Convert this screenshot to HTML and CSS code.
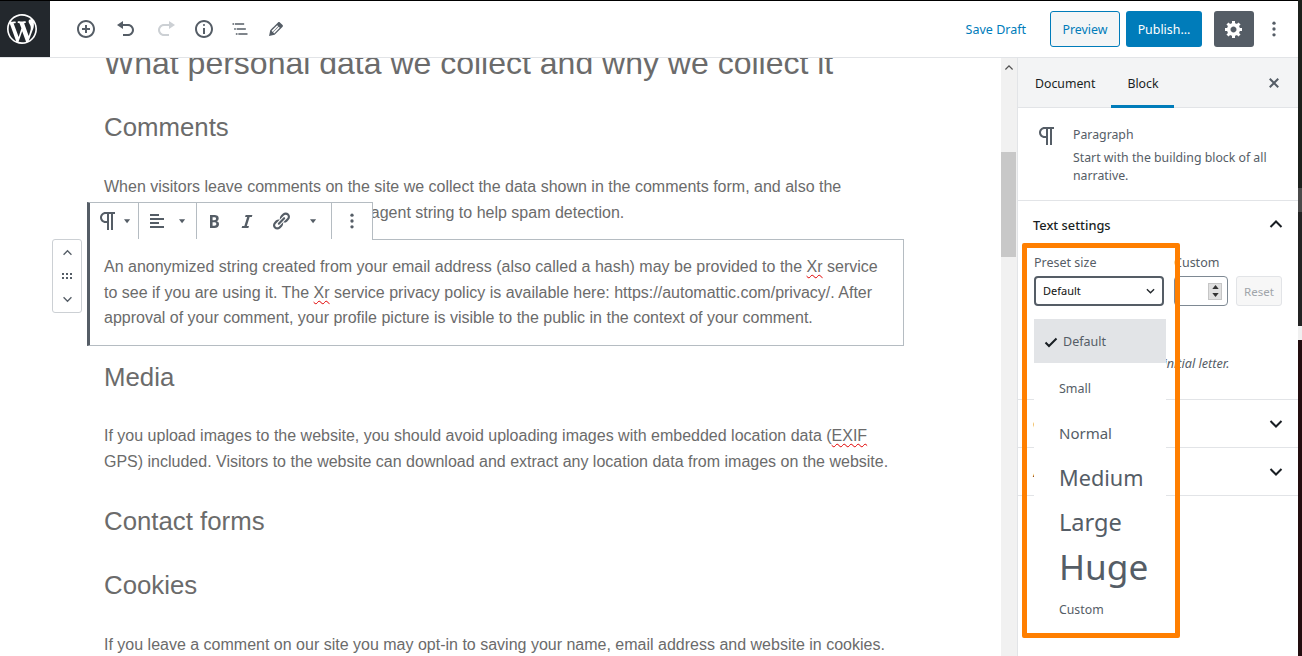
FILE: index.html
```html
<!DOCTYPE html>
<html lang="en">
<head>
<meta charset="utf-8">
<title>Edit Post</title>
<link rel="stylesheet" href="styles.css">
</head>
<body>
<div class="app">
  <div class="main">
    <header class="topbar">
      <div class="logo">
        <svg class="logo-svg" viewBox="0 0 20 20"><path d="M20 10c0-5.51-4.49-10-10-10C4.48 0 0 4.49 0 10c0 5.52 4.48 10 10 10 5.51 0 10-4.48 10-10zM7.78 15.37L4.37 6.22c.55-.02 1.17-.08 1.17-.08.5-.06.44-1.13-.06-1.11 0 0-1.45.11-2.37.11-.18 0-.37 0-.58-.01C4.12 2.69 6.87 1.11 10 1.11c2.33 0 4.45.87 6.05 2.34-.68-.11-1.65.39-1.65 1.58 0 .74.45 1.36.9 2.1.35.61.55 1.36.55 2.46 0 1.49-1.4 5-1.4 5l-3.03-8.37c.54-.02.82-.17.82-.17.5-.05.44-1.25-.06-1.22 0 0-1.44.12-2.38.12-.87 0-2.33-.12-2.33-.12-.5-.03-.56 1.2-.06 1.22l.92.08 1.26 3.41zM17.41 10c.24-.64.74-1.87.43-4.25.7 1.29 1.05 2.71 1.05 4.25 0 3.29-1.73 6.24-4.4 7.78.97-2.59 1.94-5.2 2.92-7.78zM6.1 18.09C3.12 16.65 1.11 13.53 1.11 10c0-1.3.23-2.48.72-3.59C3.25 10.3 4.67 14.2 6.1 18.09zm4.03-6.63l2.58 6.98c-.86.29-1.76.45-2.71.45-.79 0-1.57-.11-2.29-.33.81-2.38 1.62-4.74 2.42-7.1z"/></svg>
      </div>
      <div class="tools">
        <svg class="ic" viewBox="0 0 20 20"><path d="M10 1c-5 0-9 4-9 9s4 9 9 9 9-4 9-9-4-9-9-9zm0 16c-3.9 0-7-3.1-7-7s3.1-7 7-7 7 3.1 7 7-3.1 7-7 7zm1-11H9v3H6v2h3v3h2v-3h3V9h-3V6z"/></svg>
        <svg class="ic ic-hist" viewBox="0 0 20 20"><path d="M12 5H7V2L1 6l6 4V7h5c2.2 0 4 1.8 4 4s-1.8 4-4 4H7v2h5c3.3 0 6-2.7 6-6s-2.7-6-6-6z"/></svg>
        <svg class="ic ic-hist ic-off" viewBox="0 0 20 20"><path d="M8 5h5V2l6 4-6 4V7H8c-2.2 0-4 1.8-4 4s1.8 4 4 4h5v2H8c-3.3 0-6-2.7-6-6s2.7-6 6-6z"/></svg>
        <svg class="ic ic-info" viewBox="0 0 20 20"><path d="M9 15h2V9H9v6zm1-10c-.5 0-1 .5-1 1s.5 1 1 1 1-.5 1-1-.5-1-1-1zm0-4c-5 0-9 4-9 9s4 9 9 9 9-4 9-9-4-9-9-9zm0 16c-3.9 0-7-3.1-7-7s3.1-7 7-7 7 3.1 7 7-3.1 7-7 7z"/></svg>
        <svg class="ic" viewBox="0 0 24 24"><path d="M5 5H3v2h2V5zm3 8h11v-2H8v2zm9-8H6v2h11V5zM7 11H5v2h2v-2zm0 8h2v-2H7v2zm3-2v2h11v-2H10z"/></svg>
        <svg class="ic" viewBox="0 0 20 20"><path d="M13.89 3.39l2.71 2.72c.46.46.42 1.24.03 1.64l-8.01 8.02-5.56 1.16 1.16-5.58s7.6-7.63 7.99-8.03c.39-.39 1.22-.39 1.68.07zm-2.73 2.79l-5.59 5.61 1.11 1.11 5.54-5.65zm-2.97 8.23l5.58-5.6-1.07-1.08-5.59 5.6z"/></svg>
      </div>
      <div class="actions">
        <span class="save">Save Draft</span>
        <span class="btn btn-preview">Preview</span>
        <span class="btn btn-publish">Publish...</span>
        <span class="btn btn-gear"><svg class="ic-gear" viewBox="0 0 20 20"><path d="M18 12h-2.18c-.17.7-.44 1.35-.81 1.93l1.54 1.54-2.1 2.1-1.54-1.54c-.58.36-1.23.63-1.91.79V19H8v-2.18c-.68-.16-1.33-.43-1.91-.79l-1.54 1.54-2.12-2.12 1.54-1.54c-.36-.58-.63-1.23-.79-1.91H1V9.03h2.17c.16-.7.44-1.35.8-1.94L2.43 5.55l2.1-2.1 1.54 1.54c.58-.37 1.24-.64 1.93-.81V2h3v2.18c.68.16 1.33.43 1.91.79l1.54-1.54 2.12 2.12-1.54 1.54c.36.59.64 1.24.8 1.94H18V12zm-8.5 1.5c1.66 0 3-1.34 3-3s-1.34-3-3-3-3 1.34-3 3 1.34 3 3 3z"/></svg></span>
        <svg class="ic kebab" viewBox="0 0 24 24"><circle cx="12" cy="5" r="2"/><circle cx="12" cy="12" r="2"/><circle cx="12" cy="19" r="2"/></svg>
      </div>
    </header>
    <div class="workspace">
      <main class="editor">
        <article class="doc">
          <h2 class="title">What personal data we collect and why we collect it</h2>
          <h3 class="head">Comments</h3>
          <p class="para">When visitors leave comments on the site we collect the data shown in the comments form, and also the visitor’s IP address and browser user agent string to help spam detection.</p>
          <div class="selected">
            <div class="toolbar">
              <div class="tb-group tb-a">
                <svg class="tb-para" viewBox="0 0 24 24"><path d="M11 5v7H9.5C7.6 12 6 10.4 6 8.5S7.6 5 9.5 5H11m8-2H9.5C6.5 3 4 5.5 4 8.5S6.5 14 9.5 14H11v7h2V5h2v16h2V5h2V3z"/></svg>
                <svg class="caret" viewBox="0 0 8 5"><path d="M0 0h7L3.500 4.500z"/></svg>
              </div>
              <div class="tb-group tb-b">
                <svg class="tb-ic" viewBox="0 0 20 20"><path d="M12 5V3H3v2h9zm5 4V7H3v2h14zm-5 4v-2H3v2h9zm5 4v-2H3v2h14z"/></svg>
                <svg class="caret" viewBox="0 0 8 5"><path d="M0 0h7L3.500 4.500z"/></svg>
              </div>
              <div class="tb-group tb-c">
                <svg class="tb-ic" viewBox="0 0 20 20"><path d="M6 4v13h4.540c1.370 0 2.460-.33 3.260-1 .8-.66 1.200-1.580 1.200-2.770 0-.84-.17-1.510-.51-2.010s-.9-.85-1.670-1.030v-.09c.57-.1 1.020-.4 1.360-.9s.51-1.130.51-1.910c0-1.140-.39-1.980-1.170-2.500C12.750 4.260 11.500 4 9.780 4H6zm2.570 5.150V6.260h1.360c.73 0 1.270.11 1.610.32.34.22.51.58.51 1.070 0 .54-.16.92-.47 1.150s-.82.35-1.510.35h-.5zm0 2.190h1.600c1.440 0 2.160.53 2.160 1.610 0 .6-.17 1.050-.51 1.340s-.86.44-1.570.44H8.570v-3.390z"/></svg>
                <svg class="tb-ic" viewBox="0 0 20 20"><path d="M14.780 6h-2.130l-2.800 9h2.120l-.62 2H4.600l.62-2h2.140l2.800-9H8.030l.62-2h6.750z"/></svg>
                <svg class="tb-ic" viewBox="0 0 20 20"><path d="M17.740 2.760c1.680 1.690 1.680 4.410 0 6.100l-1.530 1.520c-1.120 1.120-2.700 1.470-4.140 1.090l2.620-2.610.76-.77.76-.76c.84-.84.84-2.200 0-3.040-.84-.85-2.200-.85-3.040 0l-.77.76-3.380 3.380c-.37-1.440-.02-3.020 1.100-4.140l1.520-1.530c1.690-1.680 4.420-1.680 6.100 0zM8.590 13.430l5.340-5.340c.42-.42.42-1.100 0-1.520-.44-.43-1.130-.39-1.530 0l-5.330 5.340c-.42.42-.42 1.100 0 1.520.44.43 1.130.39 1.520 0zm-.76 2.290l4.140-4.150c.38 1.440.03 3.020-1.090 4.140l-1.520 1.530c-1.690 1.680-4.410 1.680-6.100 0-1.680-1.680-1.680-4.420 0-6.100l1.530-1.520c1.120-1.120 2.700-1.470 4.140-1.100l-4.140 4.150c-.85.84-.85 2.200 0 3.050.84.84 2.200.84 3.040 0z"/></svg>
                <svg class="caret" viewBox="0 0 8 5"><path d="M0 0h7L3.500 4.500z"/></svg>
              </div>
              <div class="tb-group tb-d">
                <svg class="tb-more" viewBox="0 0 24 24"><circle cx="12" cy="5" r="2"/><circle cx="12" cy="12" r="2"/><circle cx="12" cy="19" r="2"/></svg>
              </div>
            </div>
            <div class="mover">
              <svg class="mv" viewBox="0 0 12 8"><path d="M1.500 6.500L6 2l4.500 4.500"/></svg>
              <svg class="grip" viewBox="0 0 10 6"><path d="M0 0h2v2H0zM4 0h2v2H4zM8 0h2v2H8zM0 4h2v2H0zM4 4h2v2H4zM8 4h2v2H8z"/></svg>
              <svg class="mv" viewBox="0 0 12 8"><path d="M1.500 1.500L6 6l4.500-4.500"/></svg>
            </div>
            <p class="para">An anonymized string created from your email address (also called a hash) may be provided to the <span class="spell">Xr</span> service to see if you are using it. The <span class="spell">Xr</span> service privacy policy is available here: https://automattic.com/privacy/. After approval of your comment, your profile picture is visible to the public in the context of your comment.</p>
          </div>
          <h3 class="head head-nudge">Media</h3>
          <p class="para">If you upload images to the website, you should avoid uploading images with embedded location data (<span class="spell">EXIF</span> GPS) included. Visitors to the website can download and extract any location data from images on the website.</p>
          <h3 class="head head-nudge">Contact forms</h3>
          <h3 class="head">Cookies</h3>
          <p class="para">If you leave a comment on our site you may opt-in to saving your name, email address and website in cookies. These are for your convenience so that you do not have to fill in your details again.</p>
        </article>
      </main>
      <div class="scrollbar">
        <svg class="sb-up" viewBox="0 0 10 6"><path d="M0 5l5-5 5 5-1 1-4-4-4 4z"/></svg>
        <div class="sb-thumb"></div>
      </div>
      <aside class="sidebar">
        <div class="tabs">
          <span class="tab">Document</span>
          <span class="tab tab-on">Block</span>
          <svg class="close" viewBox="0 0 20 20"><path d="M14.950 6.460L11.410 10l3.540 3.540-1.410 1.410L10 11.420l-3.530 3.530-1.420-1.420L8.580 10 5.050 6.470l1.420-1.420L10 8.580l3.540-3.530z"/></svg>
        </div>
        <section class="card">
          <svg class="card-ic" viewBox="0 0 24 24"><path d="M11 5v7H9.500C7.600 12 6 10.400 6 8.500S7.600 5 9.500 5H11m8-2H9.500C6.500 3 4 5.500 4 8.500S6.500 14 9.500 14H11v7h2V5h2v16h2V5h2V3z"/></svg>
          <div class="card-body">
            <div class="card-title">Paragraph</div>
            <div class="card-desc">Start with the building block of all narrative.</div>
          </div>
        </section>
        <section class="panel panel-text">
          <div class="panel-head">
            <span class="panel-title">Text settings</span>
            <svg class="chev chev-up" viewBox="0 0 14 8"><path d="M1.500 7L7 1.500 12.500 7"/></svg>
          </div>
          <div class="size-row">
            <div class="field field-preset">
              <span class="lab">Preset size</span>
              <div class="select">Default
                <svg class="sel-chev" viewBox="0 0 10 6"><path d="M1 1l4 4 4-4"/></svg>
              </div>
            </div>
            <div class="field field-custom">
              <span class="lab">Custom</span>
              <div class="number">
                <div class="spin">
                  <svg class="spin-a" viewBox="0 0 8 5"><path d="M4 0l4 5H0z"/></svg>
                  <svg class="spin-a" viewBox="0 0 8 5"><path d="M4 5L0 0h8z"/></svg>
                </div>
              </div>
            </div>
            <div class="reset">Reset</div>
          </div>
          <div class="hint">Toggle to show a large initial letter.</div>
        </section>
        <section class="panel panel-closed">
          <span class="panel-title">Color settings</span>
          <svg class="chev" viewBox="0 0 14 8"><path d="M1.500 1L7 6.500 12.500 1"/></svg>
        </section>
        <section class="panel panel-closed">
          <span class="panel-title">Advanced</span>
          <svg class="chev" viewBox="0 0 14 8"><path d="M1.500 1L7 6.500 12.500 1"/></svg>
        </section>
        <div class="menu">
          <div class="item item-on"><svg class="check" viewBox="0 0 14 11"><path d="M1.500 5.500L5 9l7.500-7.500"/></svg>Default</div>
          <div class="item i-small">Small</div>
          <div class="item i-normal">Normal</div>
          <div class="item i-medium">Medium</div>
          <div class="item i-large">Large</div>
          <div class="item i-huge">Huge</div>
          <div class="item i-custom">Custom</div>
        </div>
        <div class="annot"></div>
      </aside>
    </div>
  </div>
  <div class="edge">
    <div class="e1"></div><div class="e2"></div><div class="e3"></div><div class="e4"></div><div class="e5"></div>
  </div>
</div>
</body>
</html>
```

FILE: styles.css
```css
* { box-sizing: border-box; }
html, body { margin: 0; height: 100%; overflow: hidden; background: #fff; }
body { font-family: "Noto Sans", "Open Sans", sans-serif; font-size: 12.300px; color: #555d66; }
svg { display: block; flex: none; fill: currentColor; }

.app { display: flex; width: 1302px; height: 656px; }
.main { width: 1298px; display: flex; flex-direction: column; border-top: 1px solid #000; }
.edge { width: 4px; display: flex; flex-direction: column; background: #1c1f1c; }
.e1 { height: 188px; background: #1c201c; }
.e2 { height: 24px; background: #4a4a4a; }
.e3 { height: 114px; background: #232323; }
.e4 { height: 14px; background: #f0f0f0; }
.e5 { flex: 1; background: #220d0f; }

/* top bar */
.topbar { height: 57px; flex: none; display: flex; align-items: center; border-bottom: 1px solid #e2e4e7; }
.logo { width: 50px; height: 56px; background: #23282d; color: #fff; display: flex; align-items: center; padding-left: 7px; }
.logo-svg { width: 30px; height: 30px; }
.tools { display: flex; align-items: center; margin-left: 26px; gap: 16px; color: #555d66; }
.ic { width: 20px; height: 20px; }
.ic-hist { margin-left: 4px; }
.ic-info { margin-left: 2px; }
.ic-off { color: #ccd0d4; }
.actions { margin-left: auto; display: flex; align-items: center; padding-right: 14px; }
.save { color: #007cba; font-size: 12.500px; margin-right: 24px; }
.btn { height: 36px; border-radius: 3px; display: flex; align-items: center; justify-content: center; font-size: 12.400px; }
.btn-preview { width: 70px; border: 1px solid #007cba; background: #f3f5f6; color: #007cba; }
.btn-publish { width: 76px; margin-left: 6px; background: #007cba; color: #fff; }
.btn-gear { width: 40px; margin-left: 12px; background: #555d66; color: #fff; }
.ic-gear { width: 20px; height: 20px; }
.kebab { margin-left: 10px; width: 20px; height: 20px; }

/* workspace */
.workspace { flex: 1; min-height: 0; display: flex; }
.editor { flex: 1; min-width: 0; overflow: hidden; }
.doc { margin-left: 104px; width: 785px; display: flex; flex-direction: column; gap: 28px; font-family: "Liberation Sans", Arial, sans-serif; color: #6b6b6b; }
.title { margin: -13px 0 0; font-size: 32px; line-height: 36px; font-weight: 400; white-space: nowrap; }
.head { margin: 0; font-size: 25.800px; line-height: 37px; font-weight: 400; }
.head-nudge { padding-top: 1px; margin-bottom: -1px; }
.para { margin: 0; font-size: 16px; line-height: 25.600px; }
.spell { text-decoration: underline wavy #e00000 1px; text-underline-offset: 2px; }

.selected { position: relative; margin: -14px -15px -16px -17px; padding: 14px 15px 14px 14px; border: 1px solid #b5bcc2; border-left: 3px solid #555d66; }
.toolbar { position: absolute; left: -3px; top: -38px; height: 38px; display: flex; background: #fff; border: 1px solid #b5bcc2; border-left: 3px solid #555d66; border-bottom: 0; padding-bottom: 1px; color: #555d66; }
.tb-group { display: flex; align-items: center; border-right: 1px solid #b5bcc2; }
.tb-a { width: 49px; padding-left: 6px; gap: 3.500px; }
.tb-b { width: 58px; padding-left: 8px; gap: 11.500px; }
.tb-c { width: 135px; padding-left: 6.500px; }
.tb-c .tb-ic { margin-right: 13.500px; }
.tb-c .caret { margin-left: 6px; }
.tb-d { width: 40px; justify-content: center; border-right: 0; }
.tb-para { width: 24px; height: 24px; }
.tb-ic { width: 20px; height: 20px; }
.caret { width: 7px; height: 5px; }
.tb-more { width: 20px; height: 20px; }
.mover { position: absolute; left: -38px; top: -1px; width: 30px; height: 74px; background: #fff; border: 1px solid #ccd0d4; border-radius: 3px; display: flex; flex-direction: column; align-items: center; justify-content: space-between; padding: 9px 0 9px; color: #555d66; }
.mv { width: 11px; height: 7px; fill: none; stroke: currentColor; stroke-width: 1.500; }
.grip { width: 10px; height: 6px; }

/* scrollbar */
.scrollbar { width: 16px; flex: none; background: #f1f1f1; position: relative; }
.sb-up { position: absolute; left: 4px; top: 7px; width: 8px; height: 5px; color: #505050; }
.sb-thumb { position: absolute; left: 0; width: 15px; top: 94px; height: 105px; background: #c8c8c8; }

/* sidebar */
.sidebar { width: 281px; flex: none; position: relative; border-left: 1px solid #e2e4e7; display: flex; flex-direction: column; }
.tabs { height: 50px; flex: none; display: flex; align-items: stretch; background: #f3f4f5; border-bottom: 1px solid #e2e4e7; }
.tab { padding: 3px 16px 0; display: flex; align-items: center; color: #191e23; border-bottom: 3px solid transparent; margin-bottom: -1px; }
.tab:first-child { padding-left: 17px; }
.tab-on { border-bottom-color: #007cba; }
.close { width: 20px; height: 20px; margin: 15px 14px 0 auto; color: #555d66; }
.card { height: 93px; flex: none; display: flex; padding: 16px 16px 0 17px; border-bottom: 1px solid #e2e4e7; gap: 14px; }
.card-ic { width: 24px; height: 24px; }
.card-body { padding-top: 1px; }
.card-title { line-height: 20px; }
.card-desc { line-height: 18px; margin-top: 4px; width: 200px; }
.panel { border-bottom: 1px solid #e2e4e7; flex: none; }
.panel-text { height: 199px; padding: 14px 15px 0 15px; }
.panel-head { display: flex; justify-content: space-between; align-items: center; height: 20px; margin-bottom: 19px; }
.panel-title { color: #191e23; font-size: 12.800px; font-weight: 500; }
.chev { width: 14px; height: 8px; fill: none; stroke: #191e23; stroke-width: 2; }
.chev-up { margin-bottom: 2px; }
.size-row { display: flex; align-items: flex-end; padding-left: 1px; }
.field { display: flex; flex-direction: column; }
.lab { font-size: 12.500px; line-height: 17px; margin-bottom: 5px; }
.select { width: 130px; height: 30px; border: 2px solid #555d66; border-radius: 4px; color: #111; font-size: 11px; padding: 0 7px 1px; display: flex; align-items: center; justify-content: space-between; }
.sel-chev { width: 9px; height: 6px; fill: none; stroke: #23282d; stroke-width: 1.500; }
.field-custom { margin-left: 10px; }
.number { width: 54px; height: 30px; border: 1px solid #7e8993; border-radius: 4px; display: flex; align-items: center; justify-content: flex-end; padding-right: 5px; }
.spin { width: 14px; height: 17px; background: #e0e0e0; border: 1px solid #c6c6c6; display: flex; flex-direction: column; align-items: center; justify-content: space-around; color: #333; }
.spin-a { width: 7px; height: 4px; }
.reset { width: 46px; height: 30px; margin-left: 8px; background: #f7f7f7; border: 1px solid #e2e4e7; border-radius: 3px; color: #a0a5aa; font-size: 11.500px; display: flex; align-items: center; justify-content: center; }
.hint { margin: 48px 0 0 1px; font-size: 12.650px; line-height: 18px; font-style: italic; white-space: nowrap; }
.panel-closed { height: 48px; display: flex; justify-content: space-between; align-items: center; padding: 0 15px; }

/* preset size menu */
.menu { position: absolute; left: 16px; top: 261px; width: 132px; height: 310px; background: #fff; display: flex; flex-direction: column; }
.item { height: 45px; flex: none; padding-left: 25px; display: flex; align-items: center; line-height: 1; }
.item-on { height: 44px; margin-bottom: 3px; background: #e2e4e7; padding: 2px 0 0 10px; gap: 5px; font-size: 12.500px; }
.check { width: 14px; height: 11px; fill: none; stroke: #191e23; stroke-width: 2; }
.i-small { font-size: 12.500px; padding-top: 2px; }
.i-normal { font-size: 15px; padding-bottom: 1px; }
.i-medium { font-size: 21.700px; padding-bottom: 2px; }
.i-large { font-size: 23.600px; padding-bottom: 2px; }
.i-huge { font-size: 35.200px; padding-bottom: 4px; }
.i-custom { font-size: 12.300px; height: 36px; padding-top: 2px; }
.annot { position: absolute; left: 4px; top: 185px; width: 158px; height: 395px; border: 5px solid #ff7f00; border-radius: 2px; pointer-events: none; }
```
